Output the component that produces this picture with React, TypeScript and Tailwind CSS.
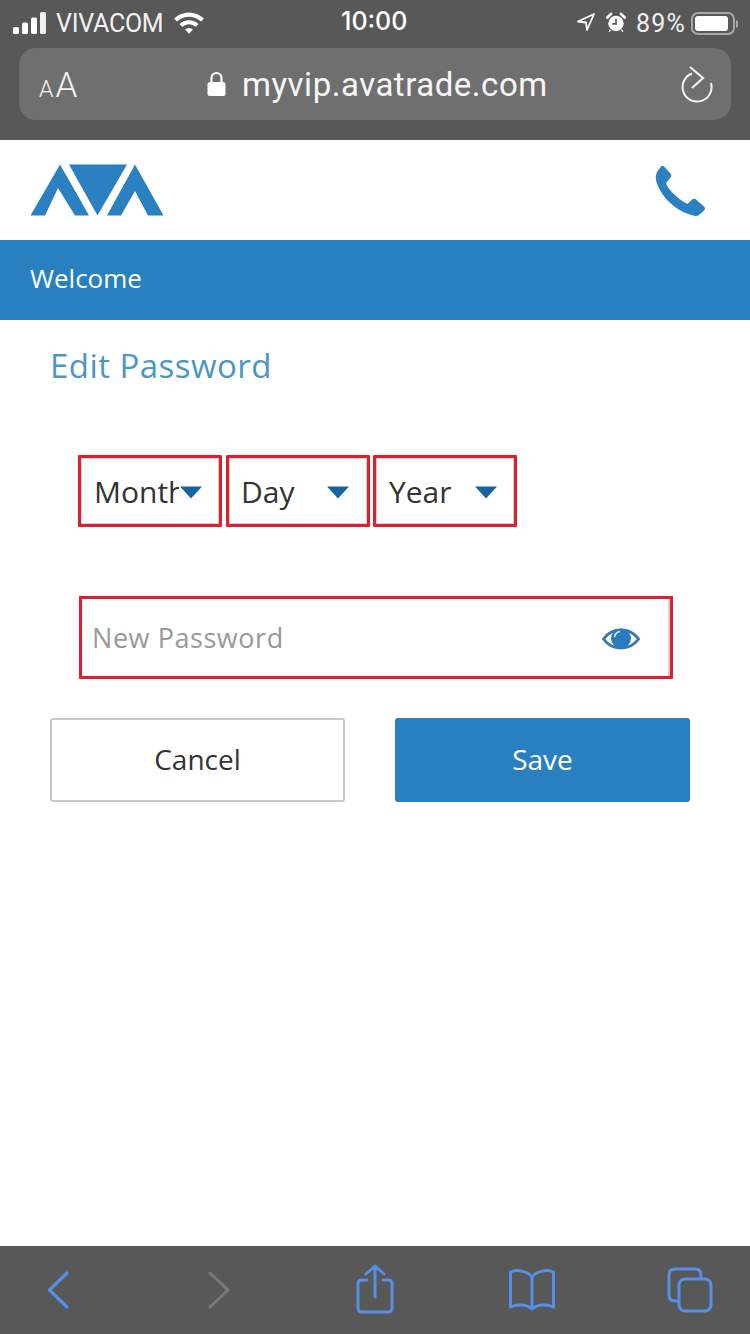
import React from "react";

const Caret = () => (
  <svg width="24" height="13" viewBox="0 0 24 13" className="block">
    <path d="M1 0.5 H23 L12 12.5 Z" fill="#15639f" />
  </svg>
);

function DateSelect({ label, clip, caretClass, textClass }: { label: string; clip?: boolean; caretClass: string; textClass: string }) {
  return (
    <div className="w-[144px] h-[72px] border-[3px] border-[#dc202c] flex items-center relative shadow-[inset_0_0_0_1px_#d4d4d4] rounded-[1px]">
      <div className={clip ? `w-[85px] ${textClass} overflow-hidden whitespace-nowrap mt-[2px]` : `${textClass} whitespace-nowrap mt-[2px]`}>
        <span className="text-[30px] leading-[40px] text-[#333333]">{label}</span>
      </div>
      <div className={`absolute top-[28px] ${caretClass}`}><Caret /></div>
    </div>
  );
}

export default function App() {
  return (
    <div className="w-[750px] h-[1334px] flex flex-col bg-white overflow-hidden font-['Open_Sans',sans-serif]">
      {/* Safari top */}
      <div className="h-[140px] bg-[#585858] shrink-0 flex flex-col font-['Inter',sans-serif] text-white">
        <div className="h-[48px] flex items-center justify-between pl-[13px] pr-[12px] relative">
          <div className="flex items-center">
            <svg width="34" height="22" viewBox="0 0 34 22" className="mr-[9px] mb-[2px]">
              <rect x="0" y="15" width="6" height="7" rx="1.5" fill="#fff" />
              <rect x="9" y="10.5" width="6" height="11.5" rx="1.5" fill="#fff" />
              <rect x="18" y="5.5" width="6" height="16.5" rx="1.5" fill="#fff" />
              <rect x="27" y="0" width="6" height="22" rx="1.5" fill="#f0f0f0" />
            </svg>
            <span className="text-[25px] leading-[30px] tracking-[-0.25px] text-[#f2f2f2] font-['Roboto',sans-serif]">VIVACOM</span>
            <svg width="32" height="24" viewBox="0 0 32 24" className="ml-[10px] mb-[4px]">
              <path d="M1 8.5 C9.5 0.5 22.5 0.5 31 8.5 L28 11.6 C21 5.2 11 5.2 4 11.6 Z" fill="#fff" />
              <path d="M6.5 14 C12 9 20 9 25.5 14 L22.6 17 C18.5 13.4 13.5 13.4 9.4 17 Z" fill="#fff" />
              <path d="M12 19.6 C14.5 17.6 17.5 17.6 20 19.6 L16 23.8 Z" fill="#fff" />
            </svg>
          </div>
          <span className="absolute left-[341px] top-[6px] text-[25px] leading-[30px] font-medium">10:00</span>
          <div className="flex items-center">
            <svg width="20" height="20" viewBox="0 0 20 20" className="mr-[10px] mb-[4px]">
              <path d="M18 2 L2 9.5 L10 10.5 L11 18 Z" fill="none" stroke="#fff" strokeWidth="1.8" strokeLinejoin="round" />
            </svg>
            <svg width="20" height="21" viewBox="0 0 22 22" className="mr-[10px] mb-[4px]">
              <circle cx="11" cy="12" r="8.5" fill="#fff" />
              <path d="M11 7 V12.5 H7" stroke="#585858" strokeWidth="1.8" fill="none" />
              <path d="M1.5 5.5 L5.5 1.5 M16.5 1.5 L20.5 5.5" stroke="#fff" strokeWidth="3" strokeLinecap="round" />
              <path d="M5 19 L3.5 21 M17 19 L18.5 21" stroke="#fff" strokeWidth="1.6" />
            </svg>
            <span className="text-[25px] leading-[30px] text-[#f2f2f2] font-['Roboto',sans-serif] tracking-[1.2px] mr-[5px]">89%</span>
            <div className="w-[44px] h-[23px] rounded-[7px] border-2 border-[#a8a8a8] p-[2px] mb-[1px]">
              <div className="w-[33px] h-full bg-white rounded-[3px]" />
            </div>
            <div className="w-[2px] h-[8px] bg-[#a8a8a8] ml-[1px] rounded-r-sm" />
          </div>
        </div>
        <div className="mx-[19px] h-[72px] rounded-[17px] bg-[#6f6f6f] flex items-center relative">
          <span className="ml-[20px] flex items-baseline gap-[2px] leading-none font-['Roboto',sans-serif] font-light text-[#f4f4f4] mt-[2px]">
            <span className="text-[23px]">A</span>
            <span className="text-[35px]">A</span>
          </span>
          <svg width="19" height="26" viewBox="0 0 19 26" className="absolute left-[188px] top-[23px]">
            <path d="M4.5 12 V7 a5 5 0 0 1 10 0 V12" fill="none" stroke="#fff" strokeWidth="2.2" />
            <rect x="0.5" y="11" width="18" height="14" rx="2.5" fill="#fff" />
          </svg>
          <span className="absolute left-[223px] top-[17px] text-[33px] leading-[40px] text-[#f6f6f6] font-['Roboto',sans-serif] tracking-[0.52px] whitespace-nowrap">myvip.avatrade.com</span>
          <svg width="32" height="38" viewBox="0 0 32 38" className="absolute right-[18px] top-[18px]">
            <path d="M11 7.5 A14.5 14.5 0 1 0 30 17" fill="none" stroke="#f4f4f4" strokeWidth="2" />
            <path d="M9 1 L22 12 L11 22" fill="none" stroke="#f4f4f4" strokeWidth="2.2" />
          </svg>
        </div>
      </div>

      {/* Site header */}
      <div className="h-[100px] shrink-0 flex items-center justify-between pl-[30px] pr-[43px]">
        <svg width="134" height="52" viewBox="0 0 134 52">
          <path d="M0.5 51.5 L30 0.5 L59 51.5 L45 51.5 L28 24 L15 51.5 Z" fill="#2a80c0" />
          <path d="M39 0.5 H97 L67.5 51.5 Z" fill="#2a80c0" />
          <path d="M77 51.5 L105 0.5 L133.5 51.5 L118 51.5 L105 27 L91 51.5 Z" fill="#2a80c0" />
        </svg>
        <svg width="52" height="54" viewBox="0 0 52 54" className="mt-[1px]">
          <path d="M6 2.5 Q7.5 1 9 2.5 L15.5 9.5 Q17 11.5 15.5 13.5 L11 19 Q12 24 22 33 Q28 38 32.5 40 L37 35.5 Q39 34 41 35.5 L49 42.5 Q51 44.5 49 46.5 L44 51 Q42 52.5 38 51.5 C20 47 5 32 1 16 Q0 12 2 8 Z" fill="#2a80c0" />
        </svg>
      </div>

      {/* Blue strip */}
      <div className="h-[80px] shrink-0 bg-[#2980bf] flex items-center pl-[30px] pb-[4px] text-[26px] text-white">Welcome</div>

      {/* Form */}
      <div className="flex-1 flex flex-col pl-[50px]">
        <h1 className="mt-[24px] text-[33px] leading-[44px] text-[#4a97c6] tracking-[0.45px]">Edit Password</h1>
        <div className="mt-[67px] ml-[28px] flex">
          <DateSelect label="Month" clip textClass="ml-[13px]" caretClass="right-[16px]" />
          <div className="w-[4px]" />
          <DateSelect label="Day" textClass="ml-[12px]" caretClass="right-[17px]" />
          <div className="w-[3px]" />
          <DateSelect label="Year" textClass="ml-[13px]" caretClass="right-[16px]" />
        </div>
        <div className="mt-[69px] ml-[29px] w-[594px] h-[83px] border-[3px] border-[#dc202c] flex items-center justify-between pl-[10px] pr-[30px] shadow-[inset_-2px_0_0_0_#cfcfcf]">
          <span className="text-[27px] text-[#999999] tracking-[0.55px] mt-[1px]">New Password</span>
          <svg width="38" height="26" viewBox="0 0 38 26" className="mt-[3px]">
            <path d="M1.5 13 C10 1 28 1 36.5 13 C28 25 10 25 1.5 13 Z" fill="#fff" stroke="#3b7aac" strokeWidth="3" />
            <circle cx="19" cy="12.5" r="10" fill="#2a7cc0" />
            <path d="M12.5 11 C13 8 15 6 18 5.5" fill="none" stroke="#e4eff8" strokeWidth="1.6" />
          </svg>
        </div>
        <div className="mt-[39px] flex gap-[50px]">
          <div className="w-[295px] h-[84px] pb-[2px] border-2 border-[#c8c8c8] rounded-[3px] flex items-center justify-center text-[28px] text-[#333333]">Cancel</div>
          <div className="w-[295px] h-[84px] pb-[2px] bg-[#2980bf] rounded-[3px] flex items-center justify-center text-[28px] text-white">Save</div>
        </div>
      </div>

      {/* Safari bottom */}
      <div className="h-[88px] shrink-0 bg-[#585858] flex items-center pl-[47px]">
        <svg width="22" height="38" viewBox="0 0 22 38" fill="none" stroke="#5590e6" strokeWidth="3.2" strokeLinecap="round" strokeLinejoin="round">
          <path d="M20 2 L2.5 19 L20 36" />
        </svg>
        <svg width="22" height="38" viewBox="0 0 22 38" fill="none" stroke="#7a7a7a" strokeWidth="3" strokeLinecap="round" strokeLinejoin="round" className="ml-[139px]">
          <path d="M2 2 L20 19 L2 36" />
        </svg>
        <svg width="38" height="50" viewBox="0 0 38 50" fill="none" stroke="#5590e6" strokeWidth="3" strokeLinecap="round" strokeLinejoin="round" className="ml-[126px] mt-[-3px]">
          <path d="M11 16 H6 Q2 16 2 20 V44 Q2 48 6 48 H32 Q36 48 36 44 V20 Q36 16 32 16 H27" />
          <path d="M19 33 V2 M10 10 L19 2 L28 10" />
        </svg>
        <svg width="48" height="42" viewBox="0 0 48 42" fill="none" stroke="#5590e6" strokeWidth="3" strokeLinejoin="round" className="ml-[114px]">
          <path d="M24 8 C20 2 8 0 2.5 3 V38 C9 35 18 35 24 40 C30 35 39 35 45.5 38 V3 C40 0 28 2 24 8 Z M24 8 V40" />
        </svg>
        <svg width="46" height="46" viewBox="0 0 46 46" fill="none" stroke="#5590e6" strokeWidth="3" className="ml-[111px] mt-[-1px]">
          <path d="M11 34 H8 Q2 34 2 28 V8 Q2 2 8 2 H28 Q34 2 34 8 V11" />
          <rect x="12" y="12" width="32" height="32" rx="6" />
        </svg>
      </div>
    </div>
  );
}
